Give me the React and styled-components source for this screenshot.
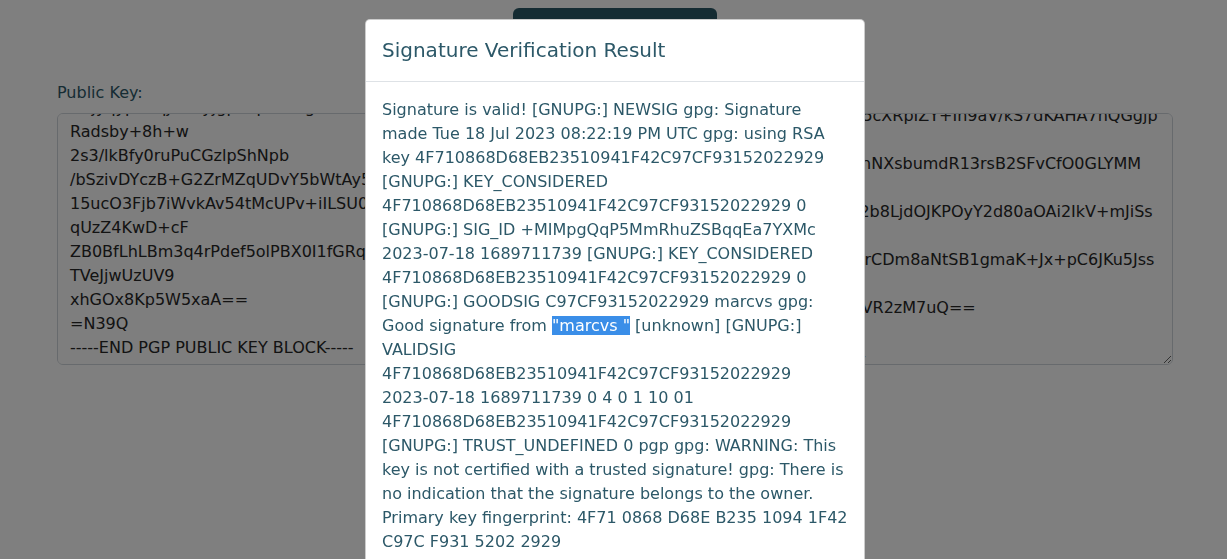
import React, { useEffect, useRef } from 'react';
import styled, { createGlobalStyle } from 'styled-components';

const publicKey = [
  '-----BEGIN PGP PUBLIC KEY BLOCK-----',
  '',
  'mQINBGS26zoBEADJ8gAqLkPx3vRt0nWm5sYc2H',
  'Qe7uLp4Zr',
  'x9Bn1KdT0fAqW3sVh6Ym2Lp8Jc4Rg5Nt7Ez0',
  'Uo3Wb',
  'Kq1Hd8Vz6Fs2Ta9Pm4Lx7Ce3Ny5Rj0Gi8Ok',
  'Bw2Ma',
  'Hxjyqyp3ZqjWmyjgpT0pLk8Yg4BfRn2Cs7Vd',
  'Radsby+8h+w',
  '2s3/lkBfy0ruPuCGzlpShNpb',
  '/bSzivDYczB+G2ZrMZqUDvY5bWtAy5Lq0Hc8Ne',
  '15ucO3Fjb7iWvkAv54tMcUPv+iILSU0aRk2fGw',
  'qUzZ4KwD+cF',
  'ZB0BfLhLBm3q4rPdef5olPBX0I1fGRqw8TnE3Y',
  'TVeJjwUzUV9',
  'xhGOx8Kp5W5xaA==',
  '=N39Q',
  '-----END PGP PUBLIC KEY BLOCK-----',
].join('\n');

const signature = [
  '-----BEGIN PGP SIGNATURE-----',
  '',
  'iQIzBAABCAAdFiEET3EIaNm5cXRpIZY+In9aV/kS7dKAHA7nQGgjp',
  'Lw4e+Qs',
  'mQINBGS2uCsBEACxq4Zk7nNXsbumdR13rsB2SFvCfO0GLYMM',
  'k8Pq1xTz',
  'Z7uXcN1pQe4ThKvWo8sRk2b8LjdOJKPOyY2d80aOAi2IkV+mJiSs',
  'Fh3w',
  'hD4wQpYe3GbVnXa2LzFO9lrCDm8aNtSB1gmaK+Jx+pC6JKu5Jss',
  'Qd0yMe',
  'Tq0sE5yHcJ8dUw1fBnrKmIzVR2zM7uQ==',
  '=xY7K',
  '-----END PGP SIGNATURE-----',
].join('\n');

const KeyField = ({ label, value, scroll }) => {
  const ref = useRef(null);
  useEffect(() => {
    if (ref.current) {
      ref.current.scrollTop = scroll === 'end' ? ref.current.scrollHeight : scroll;
    }
  }, [scroll]);
  return (
    <Field>
      <Label>{label}</Label>
      <KeyArea ref={ref} defaultValue={value} spellCheck={false} wrap="off" />
    </Field>
  );
};

const App = () => {
  return (
    <>
      <GlobalStyle />
      <Page>
        <TopBar>
          <ActionButton>Verify Signature</ActionButton>
        </TopBar>
        <Row>
          <KeyField label="Public Key:" value={publicKey} scroll="end" />
          <KeyField label="Signature:" value={signature} scroll={64} />
        </Row>
      </Page>

      <Overlay>
        <Dialog>
          <DialogHeader>
            <DialogTitle>Signature Verification Result</DialogTitle>
          </DialogHeader>
          <DialogBody>
            Signature is valid! [GNUPG:] NEWSIG gpg: Signature made Tue 18 Jul 2023 08:22:19 PM UTC
            gpg: using RSA key 4F710868D68EB23510941F42C97CF93152022929 [GNUPG:] KEY_CONSIDERED
            4F710868D68EB23510941F42C97CF93152022929 0 [GNUPG:] SIG_ID +MIMpgQqP5MmRhuZSBqqEa7YXMc
            2023-07-18 1689711739 [GNUPG:] KEY_CONSIDERED 4F710868D68EB23510941F42C97CF93152022929 0
            [GNUPG:] GOODSIG C97CF93152022929 marcvs gpg: Good signature from{' '}
            <Selected>"marcvs "</Selected> [unknown] [GNUPG:] VALIDSIG
            4F710868D68EB23510941F42C97CF93152022929 <NoWrap>2023-07-18</NoWrap> 1689711739 0 4 0 1 10 01
            4F710868D68EB23510941F42C97CF93152022929 [GNUPG:] TRUST_UNDEFINED 0 pgp gpg: WARNING:
            This key is not certified with a trusted signature! gpg: There is no indication that the
            signature belongs to the owner. Primary key fingerprint: 4F71 0868 D68E B235 1094 1F42
            C97C F931 5202 2929
          </DialogBody>
        </Dialog>
      </Overlay>
    </>
  );
};

const GlobalStyle = createGlobalStyle`
  html, body {
    margin: 0;
    height: 100%;
    overflow: hidden;
  }
  body {
    padding-left: 3px;
    background: #fff;
    color: #212529;
    font-family: "DejaVu Sans", "Noto Sans", sans-serif;
    font-size: 16px;
    line-height: 24px;
  }
`;

const Page = styled.div`
  box-sizing: border-box;
  max-width: 1140px;
  margin: 0 auto;
  padding: 8px 12px 0;
`;

const TopBar = styled.div`
  display: flex;
  justify-content: center;
  margin-bottom: 25px;
`;

const ActionButton = styled.button`
  width: 204px;
  height: 48px;
  border: none;
  border-radius: 6px;
  background: #2a5866;
  color: #fff;
  font-family: inherit;
  font-size: 16px;
`;

const Row = styled.div`
  display: grid;
  grid-template-columns: 1fr 1fr;
  gap: 24px;
`;

const Field = styled.div`
  display: flex;
  flex-direction: column;
`;

const Label = styled.label`
  margin-bottom: 8px;
  color: #2c5868;
`;

const KeyArea = styled.textarea`
  display: block;
  box-sizing: border-box;
  width: 100%;
  height: 252px;
  padding: 6px 12px 4px;
  border: 1px solid #ced4da;
  border-radius: 6px;
  background: #fcfcfc;
  color: #262626;
  font-family: "DejaVu Sans", sans-serif;
  font-size: 16px;
  line-height: 24px;
  white-space: pre;
  overflow: auto;
  scrollbar-width: none;
  resize: vertical;
  outline: none;
`;

const Overlay = styled.div`
  position: fixed;
  inset: 0;
  display: flex;
  justify-content: center;
  align-items: flex-start;
  box-sizing: border-box;
  padding: 19px 0 0 3px;
  background: rgba(0, 0, 0, 0.5);
  overflow: hidden;
`;

const Dialog = styled.div`
  box-sizing: border-box;
  width: 500px;
  flex-shrink: 0;
  background: #fff;
  border: 1px solid rgba(0, 0, 0, 0.2);
  border-radius: 5px;
`;

const DialogHeader = styled.div`
  padding: 15px 16px 16px;
  border-bottom: 1px solid #dee2e6;
`;

const DialogTitle = styled.h5`
  margin: 0;
  font-size: 20px;
  line-height: 30px;
  font-weight: 400;
  color: #2c5868;
`;

const DialogBody = styled.div`
  padding: 16px;
  color: #2c5868;
  font-size: 16px;
  line-height: 24px;
`;

const Selected = styled.span`
  background: #3a8ee8;
  color: #fff;
`;

const NoWrap = styled.span`
  white-space: nowrap;
`;

export default App;
